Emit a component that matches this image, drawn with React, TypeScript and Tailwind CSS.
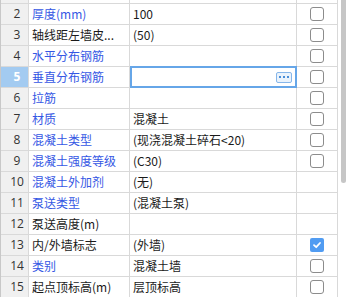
import React from "react";

type Row = {
  n: number;
  label: string;
  blue: boolean;
  value: string;
  cb: "none" | "off" | "on";
  selected?: boolean;
};

const rows: Row[] = [
  { n: 1, label: "", blue: false, value: "", cb: "none" },
  { n: 2, label: "厚度(mm)", blue: true, value: "100", cb: "off" },
  { n: 3, label: "轴线距左墙皮...", blue: false, value: "(50)", cb: "off" },
  { n: 4, label: "水平分布钢筋", blue: true, value: "", cb: "off" },
  { n: 5, label: "垂直分布钢筋", blue: true, value: "", cb: "off", selected: true },
  { n: 6, label: "拉筋", blue: true, value: "", cb: "off" },
  { n: 7, label: "材质", blue: true, value: "混凝土", cb: "off" },
  { n: 8, label: "混凝土类型", blue: true, value: "(现浇混凝土碎石<20)", cb: "off" },
  { n: 9, label: "混凝土强度等级", blue: true, value: "(C30)", cb: "off" },
  { n: 10, label: "混凝土外加剂", blue: true, value: "(无)", cb: "none" },
  { n: 11, label: "泵送类型", blue: true, value: "(混凝土泵)", cb: "none" },
  { n: 12, label: "泵送高度(m)", blue: false, value: "", cb: "none" },
  { n: 13, label: "内/外墙标志", blue: false, value: "(外墙)", cb: "on" },
  { n: 14, label: "类别", blue: true, value: "混凝土墙", cb: "off" },
  { n: 15, label: "起点顶标高(m)", blue: false, value: "层顶标高", cb: "off" },
];

function Check({ state }: { state: "none" | "off" | "on" }) {
  if (state === "none") return null;
  if (state === "on")
    return (
      <div className="w-[14px] h-[14px] rounded-[2px] bg-[#519cf2] flex items-center justify-center">
        <svg width="10" height="10" viewBox="0 0 10 10">
          <path d="M2 5.2 L4.2 7.2 L8 3" stroke="white" strokeWidth="1.8" fill="none" strokeLinecap="round" strokeLinejoin="round" />
        </svg>
      </div>
    );
  return <div className="w-[14px] h-[14px] rounded-[3px] border border-[#8c8c8c] bg-white" />;
}

export default function App() {
  return (
    <div
      className="w-[346px] h-[297px] overflow-hidden bg-white relative text-[12px] flex"
      style={{ fontFamily: '"Segoe UI", "Noto Sans", "Noto Sans CJK SC", sans-serif' }}
    >
      <div className="w-[338px] border-l border-[#c8c8c8]">
        <div className="-mt-[17px]">
          {rows.map((r) => (
            <div key={r.n} className="flex h-[21px] border-b border-[#d9d9d9]">
              <div
                className={
                  "w-[28px] shrink-0 border-r border-[#d9d9d9] flex items-center justify-center pl-[5px] " +
                  (r.selected ? "bg-[#a3cbf1] text-white font-bold" : "bg-[#f0f0f0] text-[#333333]")
                }
                style={{ fontFamily: '"Open Sans", "Noto Sans", sans-serif' }}
              >
                {r.n > 1 ? r.n : ""}
              </div>
              <div
                className={
                  "w-[101px] shrink-0 border-r border-[#d9d9d9] flex items-center pl-[3px] whitespace-nowrap overflow-hidden " +
                  (r.blue ? "text-[#3557e4]" : "text-[#1a1a1a]")
                }
                style={{ fontFamily: '"Noto Sans CJK SC", "Noto Sans", sans-serif' }}
              >
                {r.label}
              </div>
              <div
                className="w-[167px] shrink-0 border-r border-[#d9d9d9] flex items-center pl-[3px] whitespace-nowrap text-[#1a1a1a] relative"
                style={{ fontFamily: '"Noto Sans CJK SC", "Noto Sans", sans-serif' }}
              >
                {r.value}
                {r.selected && (
                  <div className="absolute -top-px left-0 -right-px -bottom-px border-2 border-[#66a6e8] flex items-center justify-end pr-[3px]">
                    <div className="w-[16px] h-[11px] rounded-[2px] border border-[#86b6ea] bg-[#eaf3fc] flex items-center justify-center gap-[2px]">
                      <div className="w-[2px] h-[2px] bg-[#4a8ed8]" />
                      <div className="w-[2px] h-[2px] bg-[#4a8ed8]" />
                      <div className="w-[2px] h-[2px] bg-[#4a8ed8]" />
                    </div>
                  </div>
                )}
              </div>
              <div className="w-[41px] shrink-0 border-r border-[#d9d9d9] flex items-center justify-center">
                <Check state={r.cb} />
              </div>
            </div>
          ))}
        </div>
      </div>
      <div className="w-[8px] bg-white pl-[3px]">
        <div className="w-[5px] h-[183px] bg-[#c6c6c6] rounded-b-[3px]" />
      </div>
    </div>
  );
}
